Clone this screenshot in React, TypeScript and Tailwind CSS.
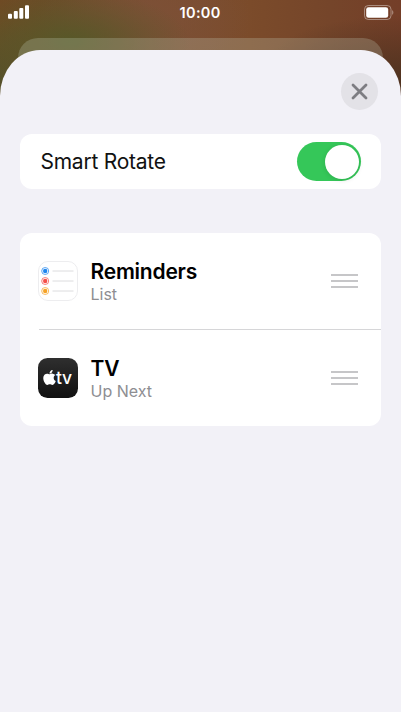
import { useState } from 'react'
import { FaApple } from 'react-icons/fa'

const BACKDROP = {
  backgroundImage: [
    'radial-gradient(ellipse 120px 52px at 70px 42px, #575828 0%, rgba(87,88,40,0) 100%)',
    'radial-gradient(ellipse 60px 60px at 0px 80px, #55512a 0%, rgba(85,81,42,0) 100%)',
    'radial-gradient(ellipse 110px 55px at 145px 20px, #7d5036 0%, rgba(125,80,54,0) 100%)',
    'radial-gradient(ellipse 150px 65px at 401px 80px, #4f3320 0%, rgba(79,51,32,0) 100%)',
    'linear-gradient(90deg, #6f4a24 0px, #6c4c28 60px, #7a4f34 150px, #7b4b2a 250px, #75452a 330px, #743e28 401px)',
  ].join(', '),
}

function StatusBar() {
  return (
    <header className="relative flex h-[26px] items-center justify-between pl-2 pr-[7px] text-white">
      <svg width="21" height="14" viewBox="0 0 21 14" fill="currentColor" className="-mt-[2px]">
        <rect x="0" y="8.7" width="4" height="5" rx="1" />
        <rect x="5.8" y="6" width="4" height="7.7" rx="1" />
        <rect x="11.3" y="3" width="4" height="10.7" rx="1" />
        <rect x="17" y="0.3" width="4" height="13.4" rx="1" />
      </svg>
      <span className="absolute left-[179.5px] top-[3px] text-[14.5px] font-semibold leading-5 tracking-[0.35px]">10:00</span>
      <svg width="30" height="15" viewBox="0 0 30 15" fill="none" className="-mt-px">
        <rect x="0.5" y="0.5" width="26.5" height="14" rx="3.8" stroke="#fff" strokeOpacity="0.4" />
        <rect x="2.2" y="2.2" width="22" height="10.6" rx="2.3" fill="#fff" />
        <path d="M28.3 5.2c1.3.5 1.3 4.1 0 4.6z" fill="#fff" fillOpacity="0.5" />
      </svg>
    </header>
  )
}

function RemindersIcon() {
  const rows = [
    { y: 10, color: '#2086ee' },
    { y: 20, color: '#f4504a' },
    { y: 30, color: '#f5a327' },
  ]
  return (
    <svg width="40" height="40" viewBox="0 0 40 40" fill="none">
      <rect x="0.5" y="0.5" width="39" height="39" rx="9.5" fill="#fff" stroke="#ededef" />
      {rows.map((row) => (
        <g key={row.color}>
          <circle cx="7.2" cy={row.y} r="3.5" stroke={row.color} strokeWidth="0.9" strokeOpacity="0.8" />
          <circle cx="7.2" cy={row.y} r="2.2" fill={row.color} />
          <path d={`M14.5 ${row.y}h21`} stroke="#dcdcde" strokeWidth="1" />
        </g>
      ))}
    </svg>
  )
}

function TvIcon() {
  return (
    <div className="flex h-10 w-10 items-center justify-center rounded-[9.5px] bg-linear-to-b from-[#2f2f2f] to-[#111111] text-white">
      <FaApple className="-mt-[2px] h-[17px] w-[13px] shrink-0" />
      <span className="text-[17.5px] font-medium leading-5 tracking-[-0.2px]">tv</span>
    </div>
  )
}

function DragHandle() {
  return (
    <div className="flex w-[27px] flex-col gap-[4.4px]">
      <span className="h-[1.6px] bg-[#c6c6c8]" />
      <span className="h-[1.6px] bg-[#c6c6c8]" />
      <span className="h-[1.6px] bg-[#c6c6c8]" />
    </div>
  )
}

const WIDGETS = [
  { title: 'Reminders', subtitle: 'List', icon: <RemindersIcon /> },
  { title: 'TV', subtitle: 'Up Next', icon: <TvIcon /> },
]

export default function App() {
  const [smartRotate, setSmartRotate] = useState(true)

  return (
    <main className="flex h-[712px] w-[401px] flex-col overflow-hidden font-['Inter',sans-serif]" style={BACKDROP}>
      <StatusBar />
      <div className="mx-[18px] mt-3 h-9 shrink-0 rounded-t-[20px] bg-[#c8d2be]/25" />

      <section className="relative -mt-6 flex-1 rounded-t-[40px_46px] bg-[#f2f1f7] px-5">
        <div className="flex justify-end pr-[3px] pt-[23px]">
          <button type="button" aria-label="Close" className="flex h-[37px] w-[37px] items-center justify-center rounded-full bg-[#e3e2e7]">
            <svg width="17" height="17" viewBox="0 0 17 17" stroke="#7d7d82" strokeWidth="2.8" strokeLinecap="round">
              <path d="M2 2l13 13M15 2L2 15" />
            </svg>
          </button>
        </div>

        <div className="mt-6 flex h-[55px] items-center justify-between rounded-[12px] bg-white pl-[20.5px] pr-5">
          <span className="text-[21px] leading-7 tracking-[-0.25px] text-[#111]">Smart Rotate</span>
          <button type="button" role="switch" aria-checked={smartRotate} onClick={() => setSmartRotate(!smartRotate)}
            className={`flex h-[39px] w-16 items-center rounded-full px-[2.5px] ${smartRotate ? 'justify-end bg-[#35c759]' : 'justify-start bg-[#e9e9ea]'}`}>
            <span className="h-[34px] w-[34px] rounded-full bg-white shadow-[0_1px_5px_rgba(0,0,0,0.12)]" />
          </button>
        </div>

        <ul className="mt-11 h-[193px] rounded-[12px] bg-white">
          {WIDGETS.map((widget, i) => (
            <li key={widget.title}>
              {i > 0 && <div className="ml-[19px] h-px bg-[#d6d6d8]" />}
              <div className="flex h-24 items-center pl-[17.5px] pr-[23px]">
                {widget.icon}
                <div className="ml-[13px] flex-1 pt-[3px]">
                  <p className="text-[21px] font-semibold leading-6 tracking-[-0.22px] text-black">{widget.title}</p>
                  <p className="text-[16px] leading-[21px] text-[#8e8e92]">{widget.subtitle}</p>
                </div>
                <DragHandle />
              </div>
            </li>
          ))}
        </ul>
      </section>
    </main>
  )
}
